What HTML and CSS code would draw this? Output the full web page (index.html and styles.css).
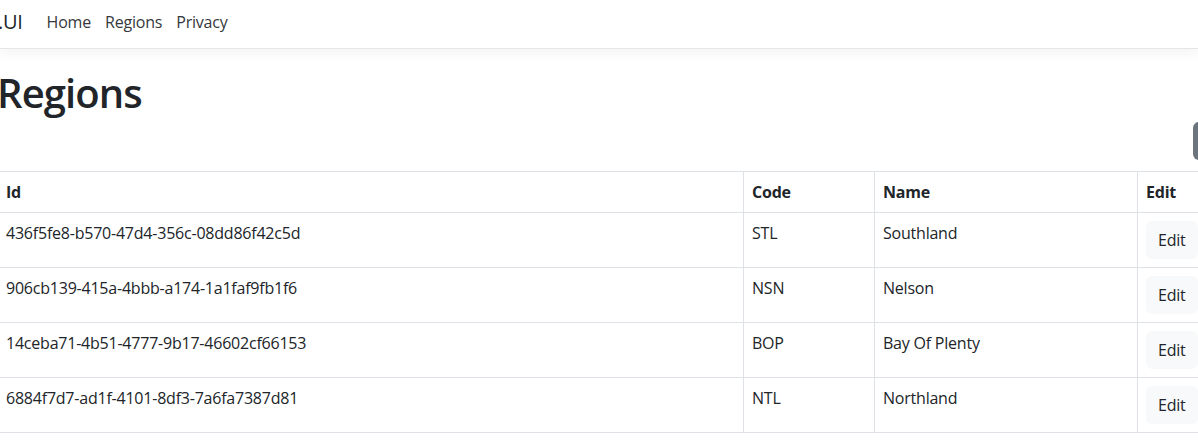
FILE: index.html
```html
<!DOCTYPE html>
<html lang="en">
<head>
<meta charset="utf-8">
<title>Regions</title>
<link rel="stylesheet" href="styles.css">
</head>
<body>
<header class="navbar">
  <a class="brand" href="#">.UI</a>
  <nav class="nav">
    <a class="nav-link" href="#">Home</a>
    <a class="nav-link" href="#">Regions</a>
    <a class="nav-link" href="#">Privacy</a>
  </nav>
</header>
<main class="main">
  <h1 class="title">Regions</h1>
  <div class="actions">
    <a class="btn-add" href="#" aria-label="Add Region"></a>
  </div>
  <table class="table">
    <colgroup>
      <col class="c-id"><col class="c-code"><col class="c-name"><col class="c-edit">
    </colgroup>
    <thead>
      <tr><th>Id</th><th>Code</th><th>Name</th><th>Edit</th></tr>
    </thead>
    <tbody>
      <tr><td>436f5fe8-b570-47d4-356c-08dd86f42c5d</td><td>STL</td><td>Southland</td><td><a class="btn-edit" href="#">Edit</a></td></tr>
      <tr><td>906cb139-415a-4bbb-a174-1a1faf9fb1f6</td><td>NSN</td><td>Nelson</td><td><a class="btn-edit" href="#">Edit</a></td></tr>
      <tr><td>14ceba71-4b51-4777-9b17-46602cf66153</td><td>BOP</td><td>Bay Of Plenty</td><td><a class="btn-edit" href="#">Edit</a></td></tr>
      <tr><td>6884f7d7-ad1f-4101-8df3-7a6fa7387d81</td><td>NTL</td><td>Northland</td><td><a class="btn-edit" href="#">Edit</a></td></tr>
    </tbody>
  </table>
</main>
</body>
</html>
```
FILE: styles.css
```css
html, body {
  margin: 0;
  padding: 0;
}
body {
  font-family: "Open Sans", "Noto Sans", "Liberation Sans", sans-serif;
  font-size: 16px;
  line-height: 24px;
  color: #212529;
  background: #fff;
  overflow: hidden;
  width: 1198px;
  height: 445px;
}
a { text-decoration: none; color: inherit; }

.navbar {
  display: flex;
  align-items: center;
  height: 44px;
  padding-bottom: 4px;
  border-bottom: 1px solid #e5e5e5;
  box-shadow: 0 4px 12px rgba(0, 0, 0, 0.05);
}
.brand {
  font-size: 20px;
  line-height: 30px;
  margin-left: -2px;
  margin-right: 24px;
  color: #212529;
  letter-spacing: -0.3px;
}
.nav {
  display: flex;
  gap: 14px;
}
.nav-link {
  color: #35393d;
  font-size: 16px;
  letter-spacing: -0.2px;
}

.main {
  margin-left: -3px;
}
.title {
  font-size: 40px;
  line-height: 48px;
  font-weight: 600;
  letter-spacing: -0.9px;
  margin: 20px 0 0 0;
}
.actions {
  display: flex;
  margin-top: 5px;
  margin-bottom: 11px;
  padding-left: 1196px;
}
.btn-add {
  display: block;
  flex: none;
  width: 110px;
  height: 38px;
  background: #6c757d;
  border-radius: 6px;
}
.table {
  border-collapse: collapse;
  table-layout: fixed;
  width: 1211px;
}
.c-id { width: 746px; }
.c-code { width: 131px; }
.c-name { width: 263px; }
.c-edit { width: 71px; }
.table th, .table td {
  border: 1px solid #dee2e6;
  padding: 8px 8px;
  text-align: left;
  vertical-align: top;
  white-space: nowrap;
  letter-spacing: -0.22px;
}
.table th {
  font-weight: 700;
}
.btn-edit {
  display: inline-block;
  background: #f8f9fa;
  border-radius: 6px;
  padding: 7px 12px;
  line-height: 24px;
}
```
